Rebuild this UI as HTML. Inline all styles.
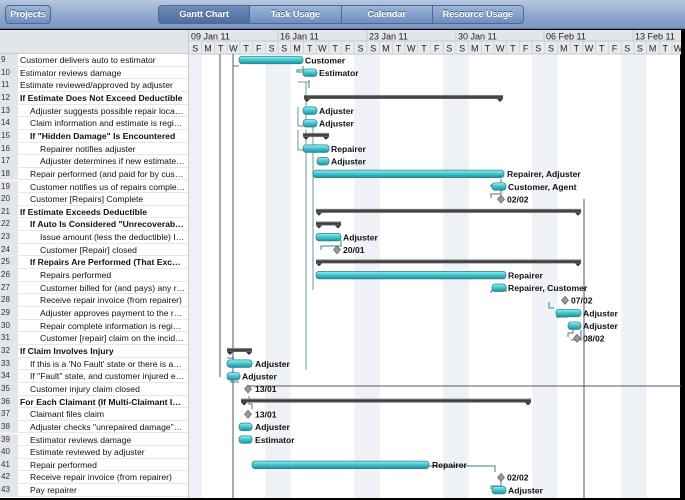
<!DOCTYPE html>
<html><head><meta charset="utf-8"><style>
*{margin:0;padding:0;box-sizing:border-box}
body{width:685px;height:500px;overflow:hidden;background:#000;font-family:"Liberation Sans",sans-serif;position:relative}
#tb{position:absolute;left:0;top:0;width:685px;height:29px;background:linear-gradient(#b7c8e0,#8ba6cc 60%,#7b99c3);border-bottom:1px solid #5a76a0}
.btn{position:absolute;top:5px;height:19px;border:1px solid #4d6a97;border-radius:4px;background:linear-gradient(#9db3d6,#6f8fc0);color:#fff;font-size:9px;font-weight:bold;text-align:center;line-height:17px;text-shadow:0 -1px 0 #3c5680}
#seg{position:absolute;left:158px;top:5px;width:366px;height:19px;border:1px solid #4d6a97;border-radius:4px;overflow:hidden;display:flex;background:linear-gradient(#9db3d6,#6f8fc0)}
#seg div{flex:1;color:#fff;font-size:9px;font-weight:bold;text-align:center;line-height:17px;border-left:1px solid #4d6a97;text-shadow:0 -1px 0 #3c5680}
#seg div:first-child{border-left:none;background:linear-gradient(#6f8bb8,#4e6d9f)}
#left{position:absolute;left:0;top:30px;width:188px;height:468px;background:#fff}
#lh{position:absolute;left:0;top:0;width:188px;height:24px;background:#e2e5ea;border-bottom:1px solid #c5c9d0}
.r{position:absolute;left:0;width:188px;height:12.65px;font-size:8.6px;line-height:12.65px;color:#111;border-bottom:1px solid #e6e8ec;white-space:nowrap;overflow:hidden}
.r .n{position:absolute;left:0;top:0;width:18px;height:100%;background:#e2e5ec;color:#333;padding-left:1px;font-size:8px}
.r .t{position:absolute;top:0}
.b{font-weight:bold}
#chart{position:absolute;left:188px;top:30px;width:492px;height:468px;background:#fff;border-left:1px solid #c5c9d0}
</style></head><body>
<div id="tb">
<div class="btn" style="left:5px;width:46px">Projects</div>
<div id="seg"><div>Gantt Chart</div><div>Task Usage</div><div>Calendar</div><div>Resource Usage</div></div>
</div>
<div id="left"><div id="lh"></div>
<div style="position:absolute;left:0;top:24px;width:188px">
<div class="r" style="top:0"><span class="n">9</span><span class="t" style="left:20px">Customer delivers auto to estimator</span></div>
<div class="r" style="top:12.65px"><span class="n">10</span><span class="t" style="left:20px">Estimator reviews damage</span></div>
<div class="r" style="top:25.3px"><span class="n">11</span><span class="t" style="left:20px">Estimate reviewed/approved by adjuster</span></div>
<div class="r b" style="top:37.95px"><span class="n" style="font-weight:normal">12</span><span class="t" style="left:20px">If Estimate Does Not Exceed Deductible</span></div>
<div class="r" style="top:50.6px"><span class="n">13</span><span class="t" style="left:30px">Adjuster suggests possible repair loca…</span></div>
<div class="r" style="top:63.25px"><span class="n">14</span><span class="t" style="left:30px">Claim information and estimate is regi…</span></div>
<div class="r b" style="top:75.9px"><span class="n" style="font-weight:normal">15</span><span class="t" style="left:30px">If "Hidden Damage" Is Encountered</span></div>
<div class="r" style="top:88.55px"><span class="n">16</span><span class="t" style="left:40px">Repairer notifies adjuster</span></div>
<div class="r" style="top:101.2px"><span class="n">17</span><span class="t" style="left:40px">Adjuster determines if new estimate…</span></div>
<div class="r" style="top:113.85px"><span class="n">18</span><span class="t" style="left:30px">Repair performed (and paid for by cus…</span></div>
<div class="r" style="top:126.5px"><span class="n">19</span><span class="t" style="left:30px">Customer notifies us of repairs comple…</span></div>
<div class="r" style="top:139.15px"><span class="n">20</span><span class="t" style="left:30px">Customer [Repairs] Complete</span></div>
<div class="r b" style="top:151.8px"><span class="n" style="font-weight:normal">21</span><span class="t" style="left:20px">If Estimate Exceeds Deductible</span></div>
<div class="r b" style="top:164.45px"><span class="n" style="font-weight:normal">22</span><span class="t" style="left:30px">If Auto Is Considered "Unrecoverab…</span></div>
<div class="r" style="top:177.1px"><span class="n">23</span><span class="t" style="left:40px">Issue amount (less the deductible) I…</span></div>
<div class="r" style="top:189.75px"><span class="n">24</span><span class="t" style="left:40px">Customer [Repair] closed</span></div>
<div class="r b" style="top:202.4px"><span class="n" style="font-weight:normal">25</span><span class="t" style="left:30px">If Repairs Are Performed (That Exc…</span></div>
<div class="r" style="top:215.05px"><span class="n">26</span><span class="t" style="left:40px">Repairs performed</span></div>
<div class="r" style="top:227.7px"><span class="n">27</span><span class="t" style="left:40px">Customer billed for (and pays) any r…</span></div>
<div class="r" style="top:240.35px"><span class="n">28</span><span class="t" style="left:40px">Receive repair invoice (from repairer)</span></div>
<div class="r" style="top:253px"><span class="n">29</span><span class="t" style="left:40px">Adjuster approves payment to the r…</span></div>
<div class="r" style="top:265.65px"><span class="n">30</span><span class="t" style="left:40px">Repair complete information is regi…</span></div>
<div class="r" style="top:278.3px"><span class="n">31</span><span class="t" style="left:40px">Customer [repair] claim on the incid…</span></div>
<div class="r b" style="top:290.95px"><span class="n" style="font-weight:normal">32</span><span class="t" style="left:20px">If Claim Involves Injury</span></div>
<div class="r" style="top:303.6px"><span class="n">33</span><span class="t" style="left:30px">If this is a 'No Fault' state or there is a…</span></div>
<div class="r" style="top:316.25px"><span class="n">34</span><span class="t" style="left:30px">If "Fault" state, and customer injured e…</span></div>
<div class="r" style="top:328.9px"><span class="n">35</span><span class="t" style="left:30px">Customer injury claim closed</span></div>
<div class="r b" style="top:341.55px"><span class="n" style="font-weight:normal">36</span><span class="t" style="left:20px">For Each Claimant (If Multi-Claimant I…</span></div>
<div class="r" style="top:354.2px"><span class="n">37</span><span class="t" style="left:30px">Claimant files claim</span></div>
<div class="r" style="top:366.85px"><span class="n">38</span><span class="t" style="left:30px">Adjuster checks "unrepaired damage"…</span></div>
<div class="r" style="top:379.5px"><span class="n">39</span><span class="t" style="left:30px">Estimator reviews damage</span></div>
<div class="r" style="top:392.15px"><span class="n">40</span><span class="t" style="left:30px">Estimate reviewed by adjuster</span></div>
<div class="r" style="top:404.8px"><span class="n">41</span><span class="t" style="left:30px">Repair performed</span></div>
<div class="r" style="top:417.45px"><span class="n">42</span><span class="t" style="left:30px">Receive repair invoice (from repairer)</span></div>
<div class="r" style="top:430.1px"><span class="n">43</span><span class="t" style="left:30px">Pay repairer</span></div>
</div></div>
<div id="chart">
<svg width="492" height="468" viewBox="188 30 492 468" style="position:absolute;left:0;top:0" font-family="Liberation Sans, sans-serif">
<defs>
<linearGradient id="tg" x1="0" y1="0" x2="0" y2="1"><stop offset="0" stop-color="#9ef0f2"/><stop offset=".45" stop-color="#45c9d2"/><stop offset="1" stop-color="#238f9a"/></linearGradient>
<linearGradient id="sg" x1="0" y1="0" x2="0" y2="1"><stop offset="0" stop-color="#999"/><stop offset=".5" stop-color="#333"/><stop offset="1" stop-color="#666"/></linearGradient>
</defs>
<g fill="#eef1f6">
<rect x="188" y="54" width="12.7" height="444"/>
<rect x="264.3" y="54" width="25.4" height="444"/>
<rect x="353.2" y="54" width="25.4" height="444"/>
<rect x="442.2" y="54" width="25.4" height="444"/>
<rect x="531.2" y="54" width="25.4" height="444"/>
<rect x="620.2" y="54" width="25.4" height="444"/>
</g>
<rect x="188" y="30" width="492" height="11" fill="#e2e5ea"/>
<rect x="188" y="41" width="492" height="13" fill="#e6e9ee"/>
<line x1="188" y1="41" x2="680" y2="41" stroke="#c5c9d0"/>
<line x1="188" y1="54" x2="680" y2="54" stroke="#c5c9d0"/>
<g stroke="#c5c9d0"><line x1="277" y1="30" x2="277" y2="41"/><line x1="366" y1="30" x2="366" y2="41"/><line x1="455" y1="30" x2="455" y2="41"/><line x1="543" y1="30" x2="543" y2="41"/><line x1="632" y1="30" x2="632" y2="41"/></g>
<g font-size="9" fill="#222"><text x="190" y="39.5">09 Jan 11</text><text x="279" y="39.5">16 Jan 11</text><text x="368" y="39.5">23 Jan 11</text><text x="457" y="39.5">30 Jan 11</text><text x="545" y="39.5">06 Feb 11</text><text x="634" y="39.5">13 Feb 11</text></g>
<g font-size="9" fill="#222" text-anchor="middle">
<text x="194.3" y="51.5">S</text><text x="207" y="51.5">M</text><text x="219.7" y="51.5">T</text><text x="232.4" y="51.5">W</text><text x="245.1" y="51.5">T</text><text x="257.8" y="51.5">F</text><text x="270.6" y="51.5">S</text>
<text x="283.3" y="51.5">S</text><text x="296" y="51.5">M</text><text x="308.7" y="51.5">T</text><text x="321.4" y="51.5">W</text><text x="334.1" y="51.5">T</text><text x="346.8" y="51.5">F</text><text x="359.5" y="51.5">S</text>
<text x="372.2" y="51.5">S</text><text x="384.9" y="51.5">M</text><text x="397.6" y="51.5">T</text><text x="410.3" y="51.5">W</text><text x="423" y="51.5">T</text><text x="435.7" y="51.5">F</text><text x="448.4" y="51.5">S</text>
<text x="461.1" y="51.5">S</text><text x="473.8" y="51.5">M</text><text x="486.5" y="51.5">T</text><text x="499.2" y="51.5">W</text><text x="511.9" y="51.5">T</text><text x="524.6" y="51.5">F</text><text x="537.3" y="51.5">S</text>
<text x="550" y="51.5">S</text><text x="562.7" y="51.5">M</text><text x="575.4" y="51.5">T</text><text x="588.1" y="51.5">W</text><text x="600.8" y="51.5">T</text><text x="613.5" y="51.5">F</text><text x="626.2" y="51.5">S</text>
<text x="638.9" y="51.5">S</text><text x="651.6" y="51.5">M</text><text x="664.3" y="51.5">T</text><text x="677" y="51.5">W</text>
</g>
<g stroke="#c8ccd3" stroke-width=".7">
<path d="M200.7 41V54M213.4 41V54M226.1 41V54M238.8 41V54M251.5 41V54M264.3 41V54M277 41V54M289.7 41V54M302.4 41V54M315.1 41V54M327.8 41V54M340.5 41V54M353.2 41V54M365.9 41V54M378.6 41V54M391.3 41V54M404 41V54M416.7 41V54M429.4 41V54M442.2 41V54M454.9 41V54M467.6 41V54M480.3 41V54M493 41V54M505.7 41V54M518.4 41V54M531.2 41V54M543.9 41V54M556.6 41V54M569.3 41V54M582 41V54M594.7 41V54M607.4 41V54M620.2 41V54M632.9 41V54M645.6 41V54M658.3 41V54M671 41V54"/>
</g>
<g stroke="#556" stroke-width="1" fill="none">
<line x1="219" y1="54" x2="219" y2="377"/>
<line x1="232" y1="54" x2="232" y2="498"/>
<path d="M583 199V498"/>
<path d="M247 386H680"/>
</g>
<g stroke="#6a9aa0" stroke-width="1" fill="none">
<path d="M305 82V120M305 130V370M312 120V290M297 82H308M297 107V126H302M297 130V150H302"/>
</g>
<g stroke="#3d7f88" stroke-width="1" fill="none">
<path d="M232 66H238M302 66V70H296V72H302M308 80V88M500 179V185H490V187M500 190V194H490V198M340 240V246H320V250M505 287V291H490V293M548 302V308H553M555 317H567M572 327V333H567V337M580 330V340H570M226 358H233M230 378V382H238M248 396V404H251V409M428 466H494V472M500 480V486H490V489"/>
</g>
<g font-size="8.6" font-weight="bold" fill="#111" stroke="none">
<g transform="translate(0,54)"><rect x="238" y="2.3" width="64" height="7.5" rx="3" fill="url(#tg)" stroke="#2b7f88" stroke-width=".7"/><text x="304" y="9.3">Customer</text></g>
<g transform="translate(0,66.65)"><rect x="302" y="2.3" width="14" height="7.5" rx="3" fill="url(#tg)" stroke="#2b7f88" stroke-width=".7"/><text x="318" y="9.3">Estimator</text></g>
<g transform="translate(0,91.95)"><rect x="303" y="3" width="199" height="4" fill="url(#sg)"/><path d="M303 7l3 3 3-3zM496 7l3 3 3-3z" fill="#333"/></g>
<g transform="translate(0,104.6)"><rect x="302" y="2.3" width="14" height="7.5" rx="3" fill="url(#tg)" stroke="#2b7f88" stroke-width=".7"/><text x="318" y="9.3">Adjuster</text></g>
<g transform="translate(0,117.25)"><rect x="302" y="2.3" width="14" height="7.5" rx="3" fill="url(#tg)" stroke="#2b7f88" stroke-width=".7"/><text x="318" y="9.3">Adjuster</text></g>
<g transform="translate(0,129.9)"><rect x="302" y="3" width="26" height="4" fill="url(#sg)"/><path d="M302 7l3 3 3-3zM322 7l3 3 3-3z" fill="#333"/></g>
<g transform="translate(0,142.55)"><rect x="302" y="2.3" width="26" height="7.5" rx="3" fill="url(#tg)" stroke="#2b7f88" stroke-width=".7"/><text x="330" y="9.3">Repairer</text></g>
<g transform="translate(0,155.2)"><rect x="316" y="2.3" width="12" height="7.5" rx="3" fill="url(#tg)" stroke="#2b7f88" stroke-width=".7"/><text x="330" y="9.3">Adjuster</text></g>
<g transform="translate(0,167.85)"><rect x="312" y="2.3" width="191" height="7.5" rx="3" fill="url(#tg)" stroke="#2b7f88" stroke-width=".7"/><text x="506" y="9.3">Repairer, Adjuster</text></g>
<g transform="translate(0,180.5)"><rect x="491" y="2.3" width="14" height="7.5" rx="3" fill="url(#tg)" stroke="#2b7f88" stroke-width=".7"/><text x="507" y="9.3">Customer, Agent</text></g>
<g transform="translate(0,193.15)"><path d="M500 2l3.5 4-3.5 4-3.5-4z" fill="#999" stroke="#555" stroke-width=".6"/><text x="506" y="9.3">02/02</text></g>
<g transform="translate(0,205.8)"><rect x="315" y="3" width="265" height="4" fill="url(#sg)"/><path d="M315 7l3 3 3-3zM574 7l3 3 3-3z" fill="#333"/></g>
<g transform="translate(0,218.45)"><rect x="315" y="3" width="25" height="4" fill="url(#sg)"/><path d="M315 7l3 3 3-3zM334 7l3 3 3-3z" fill="#333"/></g>
<g transform="translate(0,231.1)"><rect x="315" y="2.3" width="25" height="7.5" rx="3" fill="url(#tg)" stroke="#2b7f88" stroke-width=".7"/><text x="342" y="9.3">Adjuster</text></g>
<g transform="translate(0,243.75)"><path d="M336 2l3.5 4-3.5 4-3.5-4z" fill="#999" stroke="#555" stroke-width=".6"/><text x="342" y="9.3">20/01</text></g>
<g transform="translate(0,256.4)"><rect x="315" y="3" width="265" height="4" fill="url(#sg)"/><path d="M315 7l3 3 3-3zM574 7l3 3 3-3z" fill="#333"/></g>
<g transform="translate(0,269.05)"><rect x="315" y="2.3" width="190" height="7.5" rx="3" fill="url(#tg)" stroke="#2b7f88" stroke-width=".7"/><text x="507" y="9.3">Repairer</text></g>
<g transform="translate(0,281.7)"><rect x="491" y="2.3" width="14" height="7.5" rx="3" fill="url(#tg)" stroke="#2b7f88" stroke-width=".7"/><text x="507" y="9.3">Repairer, Customer</text></g>
<g transform="translate(0,294.35)"><path d="M564 2l3.5 4-3.5 4-3.5-4z" fill="#999" stroke="#555" stroke-width=".6"/><text x="570" y="9.3">07/02</text></g>
<g transform="translate(0,307)"><rect x="555" y="2.3" width="25" height="7.5" rx="3" fill="url(#tg)" stroke="#2b7f88" stroke-width=".7"/><text x="582" y="9.3">Adjuster</text></g>
<g transform="translate(0,319.65)"><rect x="567" y="2.3" width="13" height="7.5" rx="3" fill="url(#tg)" stroke="#2b7f88" stroke-width=".7"/><text x="582" y="9.3">Adjuster</text></g>
<g transform="translate(0,332.3)"><path d="M576 2l3.5 4-3.5 4-3.5-4z" fill="#999" stroke="#555" stroke-width=".6"/><text x="582" y="9.3">08/02</text></g>
<g transform="translate(0,344.95)"><rect x="226" y="3" width="25" height="4" fill="url(#sg)"/><path d="M226 7l3 3 3-3zM245 7l3 3 3-3z" fill="#333"/></g>
<g transform="translate(0,357.6)"><rect x="226" y="2.3" width="25" height="7.5" rx="3" fill="url(#tg)" stroke="#2b7f88" stroke-width=".7"/><text x="254" y="9.3">Adjuster</text></g>
<g transform="translate(0,370.25)"><rect x="226" y="2.3" width="13" height="7.5" rx="3" fill="url(#tg)" stroke="#2b7f88" stroke-width=".7"/><text x="241" y="9.3">Adjuster</text></g>
<g transform="translate(0,382.9)"><path d="M247 2l3.5 4-3.5 4-3.5-4z" fill="#999" stroke="#555" stroke-width=".6"/><text x="254" y="9.3">13/01</text></g>
<g transform="translate(0,395.55)"><rect x="240" y="3" width="290" height="4" fill="url(#sg)"/><path d="M240 7l3 3 3-3zM524 7l3 3 3-3z" fill="#333"/></g>
<g transform="translate(0,408.2)"><path d="M247 2l3.5 4-3.5 4-3.5-4z" fill="#999" stroke="#555" stroke-width=".6"/><text x="254" y="9.3">13/01</text></g>
<g transform="translate(0,420.85)"><rect x="238" y="2.3" width="13" height="7.5" rx="3" fill="url(#tg)" stroke="#2b7f88" stroke-width=".7"/><text x="254" y="9.3">Adjuster</text></g>
<g transform="translate(0,433.5)"><rect x="238" y="2.3" width="13" height="7.5" rx="3" fill="url(#tg)" stroke="#2b7f88" stroke-width=".7"/><text x="254" y="9.3">Estimator</text></g>
<g transform="translate(0,458.8)"><rect x="251" y="2.3" width="177" height="7.5" rx="3" fill="url(#tg)" stroke="#2b7f88" stroke-width=".7"/><text x="431" y="9.3">Repairer</text></g>
<g transform="translate(0,471.45)"><path d="M500 2l3.5 4-3.5 4-3.5-4z" fill="#999" stroke="#555" stroke-width=".6"/><text x="506" y="9.3">02/02</text></g>
<g transform="translate(0,484.1)"><rect x="491" y="2.3" width="14" height="7.5" rx="3" fill="url(#tg)" stroke="#2b7f88" stroke-width=".7"/><text x="507" y="9.3">Adjuster</text></g>
</g>
</svg>
</div>
</body></html>
